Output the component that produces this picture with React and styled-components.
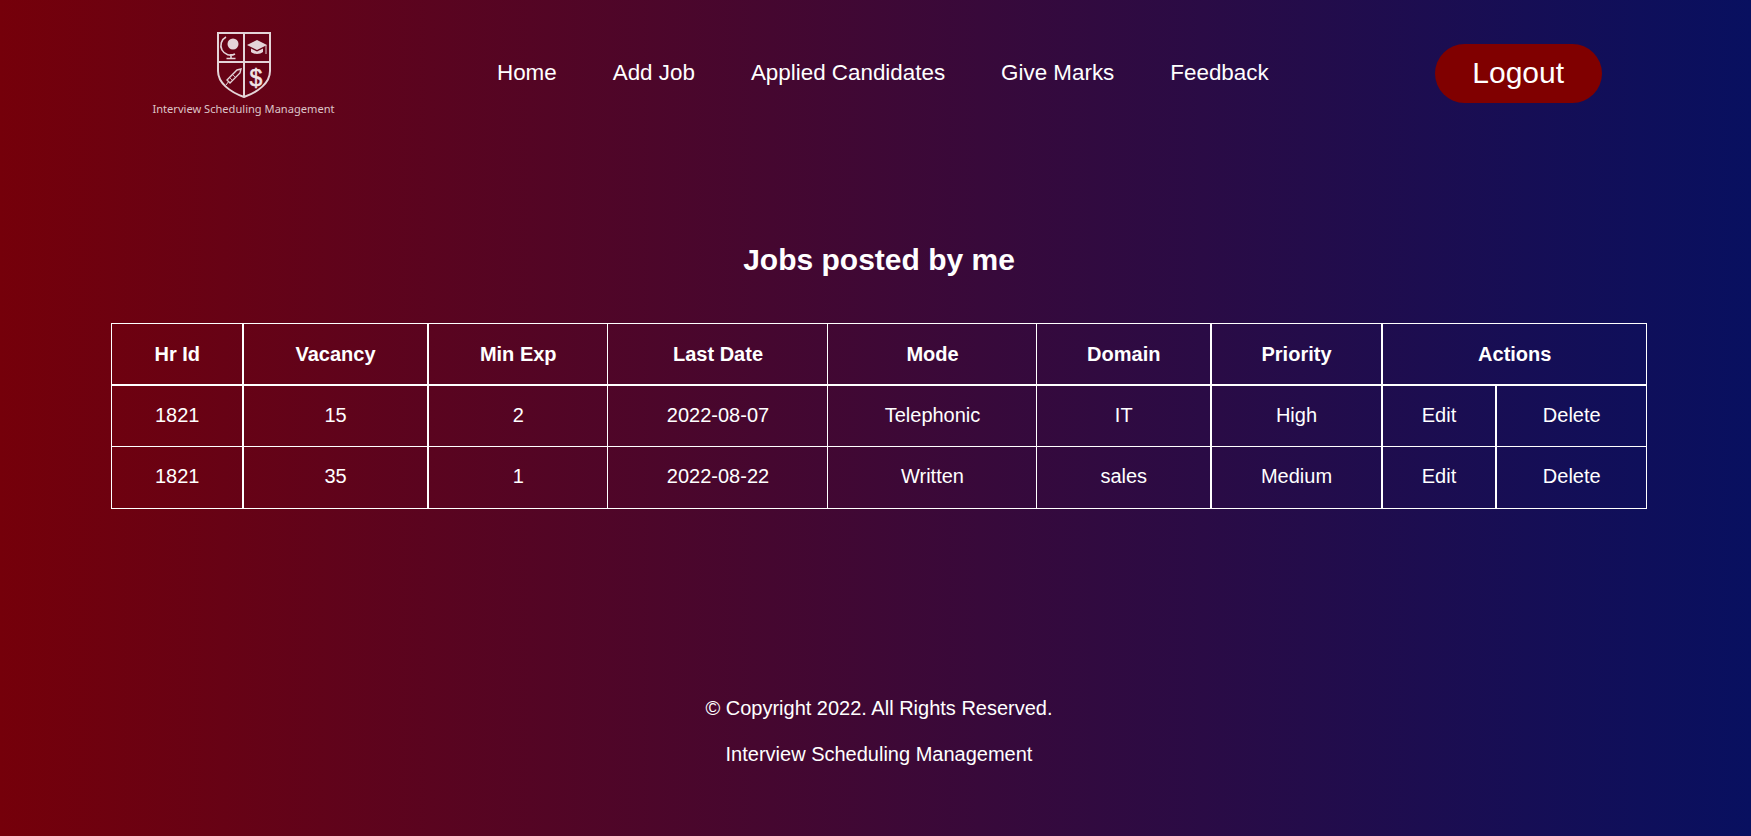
import styled, { createGlobalStyle } from 'styled-components'

const GlobalStyle = createGlobalStyle`
  html, body {
    margin: 0;
    padding: 0;
  }
  body {
    font-family: "Liberation Sans", Arial, sans-serif;
    color: #fff;
  }
`

const Page = styled.div`
  width: 1751px;
  height: 836px;
  overflow: hidden;
  background: linear-gradient(to right, #75000a, #081060);
`

const Header = styled.header`
  display: flex;
  align-items: center;
  height: 146px;
  padding-left: 152px;
`

const Brand = styled.div`
  width: 183px;
  display: flex;
  flex-direction: column;
  align-items: center;
  gap: 2px;
`

const BrandName = styled.span`
  font-family: "Noto Sans", sans-serif;
  font-size: 11.1px;
  color: #dcc4c8;
  white-space: nowrap;
`

const Nav = styled.nav`
  display: flex;
  gap: 56px;
  margin-left: 162px;
`

const NavLink = styled.a`
  font-size: 22.4px;
  color: #fff;
`

const LogoutButton = styled.button`
  margin-left: 166px;
  width: 167px;
  height: 59px;
  border: 0;
  border-radius: 30px;
  background: #800000;
  color: #fff;
  font-family: inherit;
  font-size: 30px;
`

const Main = styled.main`
  padding-left: 111px;
`

const Title = styled.h2`
  width: 1536px;
  margin: 97px 0 0;
  font-size: 30px;
  line-height: 34px;
  text-align: center;
`

const JobsTable = styled.table`
  width: 1535px;
  margin-top: 46px;
  border-collapse: collapse;
  table-layout: fixed;
  font-size: 20px;
`

const Cell = styled.td`
  height: 58px;
  padding: 0 0 2px 1px;
  text-align: center;
  border: 1px solid #fff;
  border-left-width: ${({ $thick }) => ($thick ? '2px' : '1px')};
  tbody tr:last-child > & {
    height: 59px;
  }
`

const HeadCell = styled(Cell).attrs({ as: 'th' })`
  height: 60px;
  padding: 0 0 0 1px;
  font-weight: bold;
  border-bottom-width: 2px;
`

const Footer = styled.footer`
  width: 1536px;
  margin: 188px 0 0 111px;
  text-align: center;
  font-size: 20px;
`

const FooterLine = styled.p`
  margin: 0 0 23px;
  line-height: 23px;
`

const columns = [131, 185, 180, 220, 209, 174, 171, 114, 151]
const thickColumns = [1, 2, 6, 7, 8]

const heads = ['Hr Id', 'Vacancy', 'Min Exp', 'Last Date', 'Mode', 'Domain', 'Priority']

const jobs = [
  ['1821', '15', '2', '2022-08-07', 'Telephonic', 'IT', 'High'],
  ['1821', '35', '1', '2022-08-22', 'Written', 'sales', 'Medium'],
]

const Logo = () => (
  <svg width="56" height="68" viewBox="0 0 56 68" fill="none" stroke="#e4d4d8">
    <path d="M2 2H54V40C54 52 42 61 28 66C14 61 2 52 2 40Z" strokeWidth="2" />
    <path d="M28 2V66M2 31H54" strokeWidth="2" />
    <circle cx="17" cy="13" r="5.5" fill="#e4d4d8" stroke="none" />
    <path d="M10 6A9.5 9.5 0 0 0 19 23M15 23V27M10.5 27.5H19.5" strokeWidth="1.6" />
    <path d="M31 14L41 9L51 14L41 19Z" fill="#e4d4d8" stroke="none" />
    <path d="M35 17.5V21C38 23.5 44 23.5 47 21V17.5L41 20.5Z" fill="#e4d4d8" stroke="none" />
    <path d="M50 14V23" strokeWidth="1" />
    <path d="M11 49L21 39L25 38L24 42L14 52Z" strokeWidth="1.4" />
    <path d="M13 46L17 50M16 43L20 47" strokeWidth="0.8" />
    <path d="M10 54L13 50" strokeWidth="1" />
    <text x="40" y="55" fontFamily="Liberation Sans, sans-serif" fontSize="23" fill="#f0e4e6" stroke="#f0e4e6" strokeWidth="0.5" textAnchor="middle">$</text>
  </svg>
)

const App = () => {
  return (
    <Page>
      <GlobalStyle />
      <Header>
        <Brand>
          <Logo />
          <BrandName>Interview Scheduling Management</BrandName>
        </Brand>
        <Nav>
          <NavLink>Home</NavLink>
          <NavLink>Add Job</NavLink>
          <NavLink>Applied Candidates</NavLink>
          <NavLink>Give Marks</NavLink>
          <NavLink>Feedback</NavLink>
        </Nav>
        <LogoutButton>Logout</LogoutButton>
      </Header>
      <Main>
        <Title>Jobs posted by me</Title>
        <JobsTable>
          <colgroup>
            {columns.map((width, index) => (
              <col key={`col-${index}`} width={width} />
            ))}
          </colgroup>
          <thead>
            <tr>
              {heads.map((head, index) => (
                <HeadCell key={head} $thick={thickColumns.includes(index)}>
                  {head}
                </HeadCell>
              ))}
              <HeadCell $thick colSpan={2}>
                Actions
              </HeadCell>
            </tr>
          </thead>
          <tbody>
            {jobs.map((job, rowIndex) => (
              <tr key={`job-${rowIndex}`}>
                {job.map((value, index) => (
                  <Cell key={`job-${rowIndex}-${index}`} $thick={thickColumns.includes(index)}>
                    {value}
                  </Cell>
                ))}
                <Cell $thick>Edit</Cell>
                <Cell $thick>Delete</Cell>
              </tr>
            ))}
          </tbody>
        </JobsTable>
      </Main>
      <Footer>
        <FooterLine>© Copyright 2022. All Rights Reserved.</FooterLine>
        <FooterLine>Interview Scheduling Management</FooterLine>
      </Footer>
    </Page>
  )
}

export default App
